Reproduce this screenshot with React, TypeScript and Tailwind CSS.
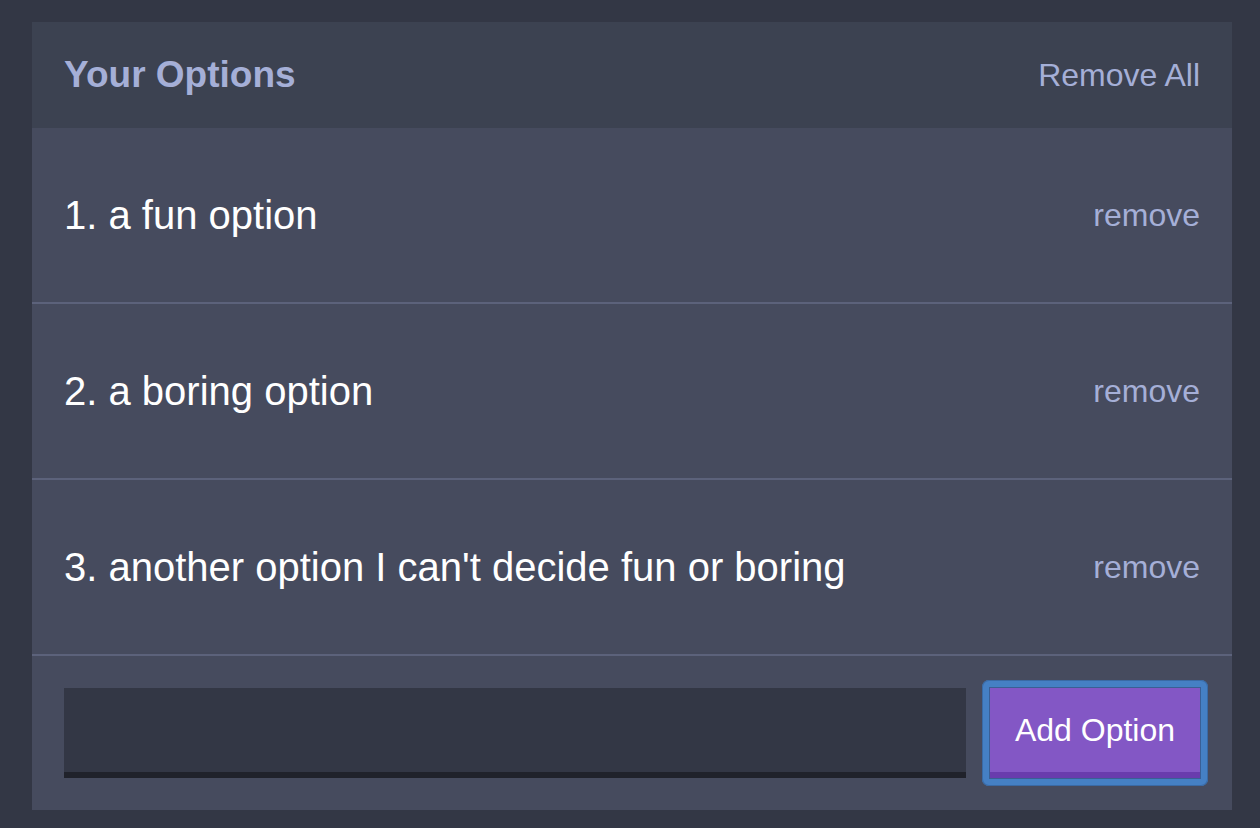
import React from 'react';

const options = [
  'a fun option',
  'a boring option',
  "another option I can't decide fun or boring",
];

export default function App() {
  return (
    <div
      className="min-h-screen bg-[#333745] pt-[22px] pl-[32px]"
      style={{ fontFamily: '"Liberation Sans", Arial, Helvetica, sans-serif' }}
    >
      <div className="w-[1200px] bg-[#464b5e]">
        <div className="flex h-[106px] items-center justify-between bg-[#3c4251] px-[32px]">
          <h3 className="text-[37px] font-bold text-[#a5afd7]">Your Options</h3>
          <button className="text-[32px] text-[#a5afd7]">Remove All</button>
        </div>

        {options.map((option, i) => (
          <div
            key={option}
            className="flex h-[176px] items-center justify-between border-b-2 border-[#5c627b] px-[32px]"
          >
            <p className="text-[40px] text-white">
              {i + 1}. {option}
            </p>
            <button className="text-[32px] text-[#a5afd7]">remove</button>
          </div>
        ))}

        <form className="flex gap-[24px] p-[32px]">
          <input
            type="text"
            className="h-[90px] flex-1 border-b-[6px] border-[#20222b] bg-[#333745] px-4 text-[32px] text-white outline-none"
          />
          <div className="-m-[8px] rounded-[7px] bg-[#4580c4] p-[8px] shadow-[inset_0_0_0_1px_#3a6aa5]">
            <button
              type="button"
              className="h-[90px] w-[210px] border-b-[6px] border-[#693cad] bg-[#8357c5] text-[32px] text-white shadow-[0_0_0_1px_#3a5f95]"
            >
              Add Option
            </button>
          </div>
        </form>
      </div>
    </div>
  );
}
